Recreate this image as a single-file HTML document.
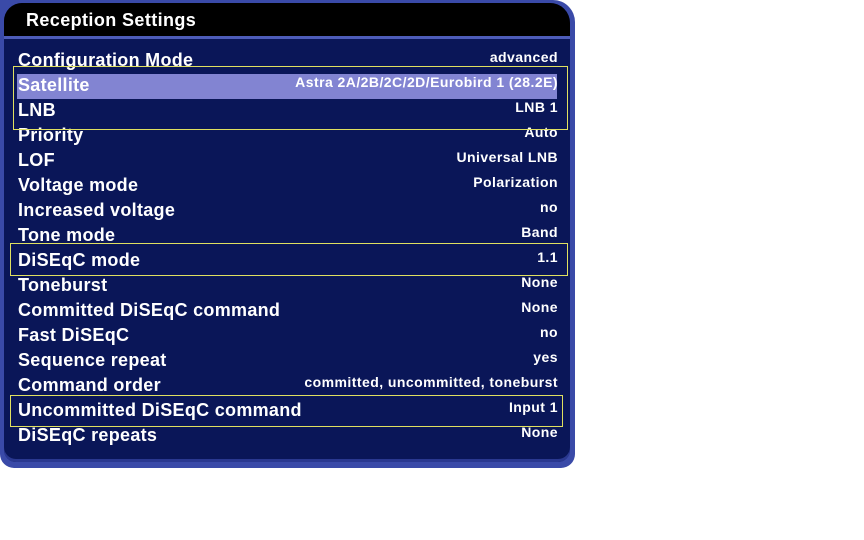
<!DOCTYPE html>
<html><head><meta charset="utf-8"><style>
body{margin:0;width:864px;height:540px;background:#fff;position:relative;overflow:hidden;font-family:"Liberation Sans",sans-serif;}
#panel{position:absolute;left:0;top:0;width:575px;height:468px;background:#3a4aa8;border-radius:0 22px 14px 14px;}
#inner{position:absolute;left:4px;top:3px;width:566px;height:459px;background:#0a1658;border-radius:18px 20px 12px 12px;overflow:hidden;box-shadow:inset 0 -3px 0 #2a3890;}
#head{position:absolute;left:0;top:0;width:566px;height:33px;background:#000;border-bottom:3px solid #4d5cb8;}
#head span{position:absolute;left:22px;top:7px;color:#fff;font-weight:bold;font-size:18px;letter-spacing:0.4px;}
.r{position:absolute;left:0;width:575px;height:25px;}
.l{position:absolute;left:18px;top:2px;color:#fff;font-weight:bold;font-size:18px;letter-spacing:0.3px;}
.v{position:absolute;right:17px;top:1px;color:#fff;font-weight:bold;font-size:14px;letter-spacing:0.45px;}
.hl{position:absolute;left:17px;top:74px;width:540px;height:25px;background:#8284d2;}
.box{position:absolute;border:1px solid #e0e060;}
</style></head><body>
<div id="panel"><div id="inner"><div id="head"><span>Reception Settings</span></div></div></div>
<div class="hl"></div>
<div class="r" style="top:48px"><span class="l">Configuration Mode</span><span class="v">advanced</span></div>
<div class="r" style="top:73px"><span class="l">Satellite</span><span class="v">Astra 2A/2B/2C/2D/Eurobird 1 (28.2E)</span></div>
<div class="r" style="top:98px"><span class="l">LNB</span><span class="v">LNB 1</span></div>
<div class="r" style="top:123px"><span class="l">Priority</span><span class="v">Auto</span></div>
<div class="r" style="top:148px"><span class="l">LOF</span><span class="v">Universal LNB</span></div>
<div class="r" style="top:173px"><span class="l">Voltage mode</span><span class="v">Polarization</span></div>
<div class="r" style="top:198px"><span class="l">Increased voltage</span><span class="v">no</span></div>
<div class="r" style="top:223px"><span class="l">Tone mode</span><span class="v">Band</span></div>
<div class="r" style="top:248px"><span class="l">DiSEqC mode</span><span class="v">1.1</span></div>
<div class="r" style="top:273px"><span class="l">Toneburst</span><span class="v">None</span></div>
<div class="r" style="top:298px"><span class="l">Committed DiSEqC command</span><span class="v">None</span></div>
<div class="r" style="top:323px"><span class="l">Fast DiSEqC</span><span class="v">no</span></div>
<div class="r" style="top:348px"><span class="l">Sequence repeat</span><span class="v">yes</span></div>
<div class="r" style="top:373px"><span class="l">Command order</span><span class="v">committed, uncommitted, toneburst</span></div>
<div class="r" style="top:398px"><span class="l">Uncommitted DiSEqC command</span><span class="v">Input 1</span></div>
<div class="r" style="top:423px"><span class="l">DiSEqC repeats</span><span class="v">None</span></div>
<div class="box" style="left:13px;top:66px;width:553px;height:62px"></div>
<div class="box" style="left:10px;top:243px;width:556px;height:31px"></div>
<div class="box" style="left:10px;top:395px;width:551px;height:30px"></div>
</body></html>
